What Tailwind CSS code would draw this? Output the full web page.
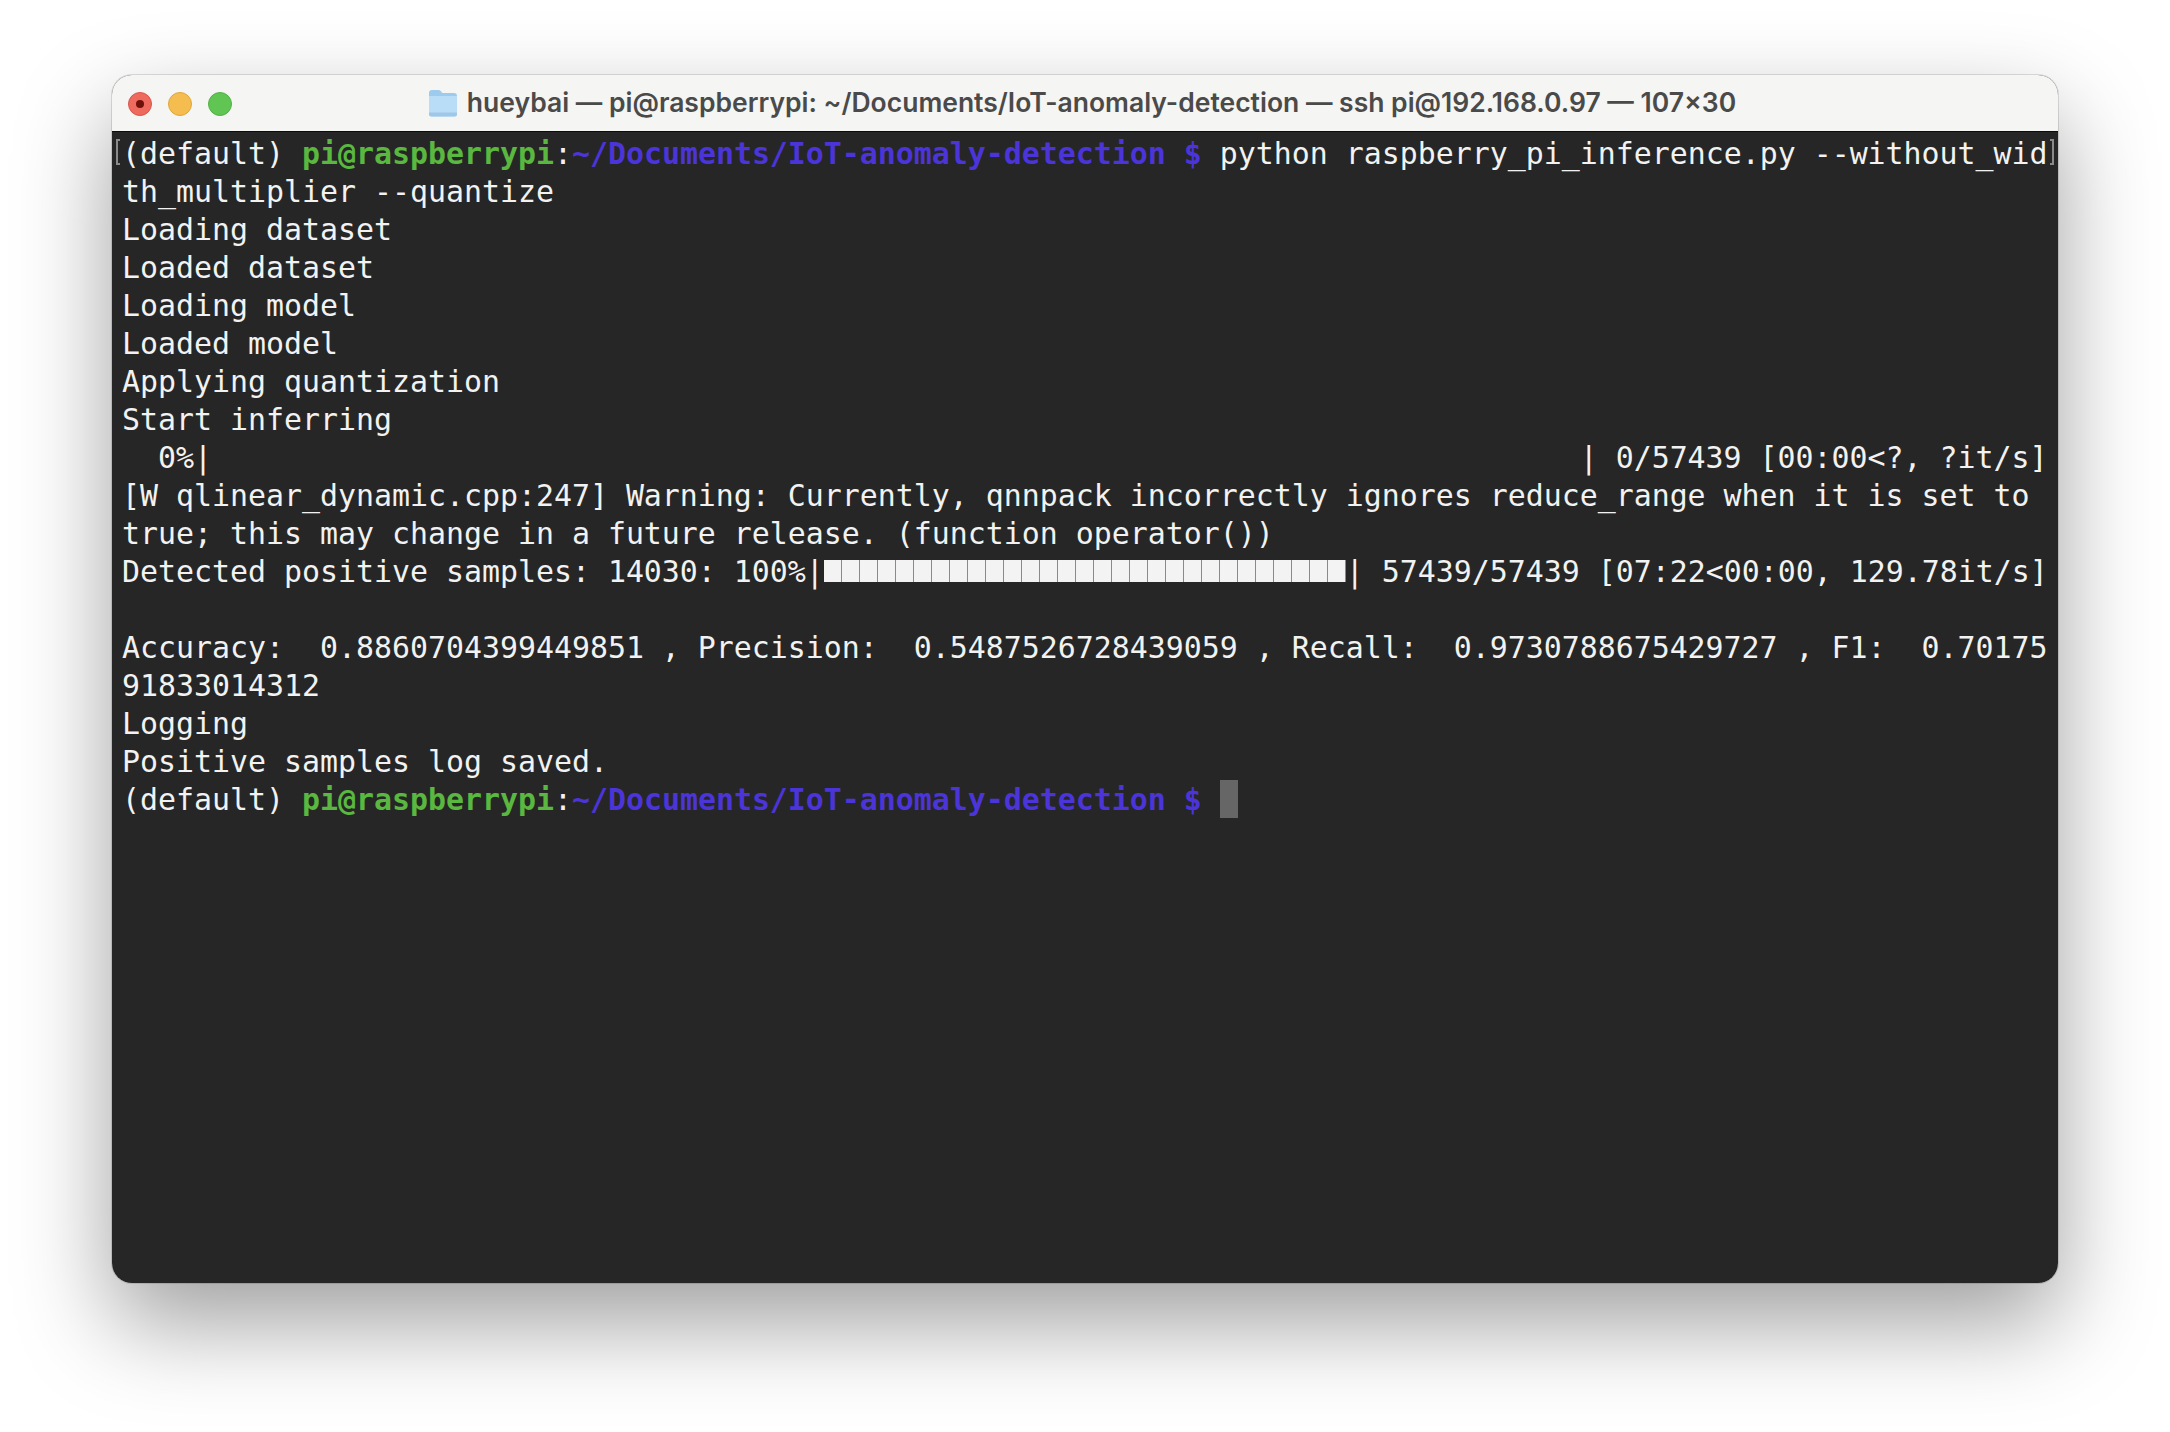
<!DOCTYPE html>
<html lang="en">
<head>
    <meta charset="UTF-8">
    <title>Terminal</title>
    <script src="https://cdn.jsdelivr.net/npm/@tailwindcss/browser@4"></script>
</head>
<body class="bg-white">
    <div class="w-[2170px] h-[1432px] overflow-hidden pl-[112px] pt-[75px]">
        <!-- Window -->
        <div class="relative w-[1946px] h-[1208px] rounded-[20px] shadow-[0_40px_95px_rgba(0,0,0,0.38),0_0_0_1px_rgba(0,0,0,0.12)]">
            <div class="w-full h-full rounded-[20px] overflow-hidden flex flex-col bg-[#262626]">
                <!-- Title bar -->
                <div class="relative h-[57px] shrink-0 flex items-center justify-center pr-[6px] bg-[#f5f5f3] border-b border-[#0c0c0c]">
                    <div class="absolute left-[16px] top-[17px] flex gap-[16px]">
                        <span class="w-[24px] h-[24px] rounded-full bg-[#ee6a5f] border border-[#d9564b] flex items-center justify-center">
                            <span class="w-[8px] h-[8px] rounded-full bg-[#6e1109]"></span>
                        </span>
                        <span class="w-[24px] h-[24px] rounded-full bg-[#f5bd4f] border border-[#dfa63a]"></span>
                        <span class="w-[24px] h-[24px] rounded-full bg-[#61c554] border border-[#52b146]"></span>
                    </div>
                    <div class="flex items-center gap-[9px] font-['Inter',sans-serif] font-semibold text-[26.500px] text-[#4a4a4a] whitespace-pre">
                        <svg width="30" height="28" viewBox="0 0 30 28">
                            <path d="M1 4a3 3 0 0 1 3-3h6.500a3 3 0 0 1 2.200 1l1.600 2H26a3 3 0 0 1 3 3v4H1z" fill="#9ccbee"/>
                            <path d="M1 7h28v18a2.500 2.500 0 0 1-2.500 2.500h-23A2.500 2.500 0 0 1 1 25z" fill="#b9dcf7"/>
                            <path d="M1 23.500h28v1.500a2.500 2.500 0 0 1-2.500 2.500h-23A2.500 2.500 0 0 1 1 25z" fill="#9fc8e8"/>
                        </svg>
                        <span>hueybai — pi@raspberrypi: ~/Documents/IoT-anomaly-detection — ssh pi@192.168.0.97 — 107×30</span>
                    </div>
                </div>

                <!-- Terminal -->
                <div class="relative grow pl-[10px] pt-[2px] font-['DejaVu_Sans_Mono',monospace] text-[29.900px] leading-[40px] text-[#f2f2f2] [&>div]:whitespace-pre [&>div]:h-[38px]">
                    <span class="absolute left-[4px] top-[7px] w-[4px] h-[26px] border-l-2 border-y-2 border-[#8a8a8a]"></span>
                    <span class="absolute left-[1938px] top-[7px] w-[4px] h-[26px] border-r-2 border-y-2 border-[#8a8a8a]"></span>
                    <div>(default) <span class="font-bold text-[#5ab73f]">pi@raspberrypi</span>:<span class="font-bold text-[#4b35d8]">~/Documents/IoT-anomaly-detection $</span> python raspberry_pi_inference.py --without_wid</div>
                    <div>th_multiplier --quantize</div>
                    <div>Loading dataset</div>
                    <div>Loaded dataset</div>
                    <div>Loading model</div>
                    <div>Loaded model</div>
                    <div>Applying quantization</div>
                    <div>Start inferring</div>
                    <div>  0%|                                                                            | 0/57439 [00:00&lt;?, ?it/s]</div>
                    <div>[W qlinear_dynamic.cpp:247] Warning: Currently, qnnpack incorrectly ignores reduce_range when it is set to</div>
                    <div>true; this may change in a future release. (function operator())</div>
                    <div class="flex items-start"><span>Detected positive samples: 14030: 100%|</span><span class="self-center w-[522px] h-[22px] bg-[repeating-linear-gradient(90deg,#f3f3f3_0,#f3f3f3_17px,#8a8a8a_17px,#8a8a8a_18px)]"></span><span>| 57439/57439 [07:22&lt;00:00, 129.78it/s]</span></div>
                    <div></div>
                    <div>Accuracy:  0.8860704399449851 , Precision:  0.5487526728439059 , Recall:  0.9730788675429727 , F1:  0.70175</div>
                    <div>91833014312</div>
                    <div>Logging</div>
                    <div>Positive samples log saved.</div>
                    <div class="flex items-start"><span>(default) <span class="font-bold text-[#5ab73f]">pi@raspberrypi</span>:<span class="font-bold text-[#4b35d8]">~/Documents/IoT-anomaly-detection $</span> </span><span class="self-stretch w-[18px] bg-[#666666]"></span></div>
                </div>
            </div>
        </div>
    </div>
</body>
</html>
